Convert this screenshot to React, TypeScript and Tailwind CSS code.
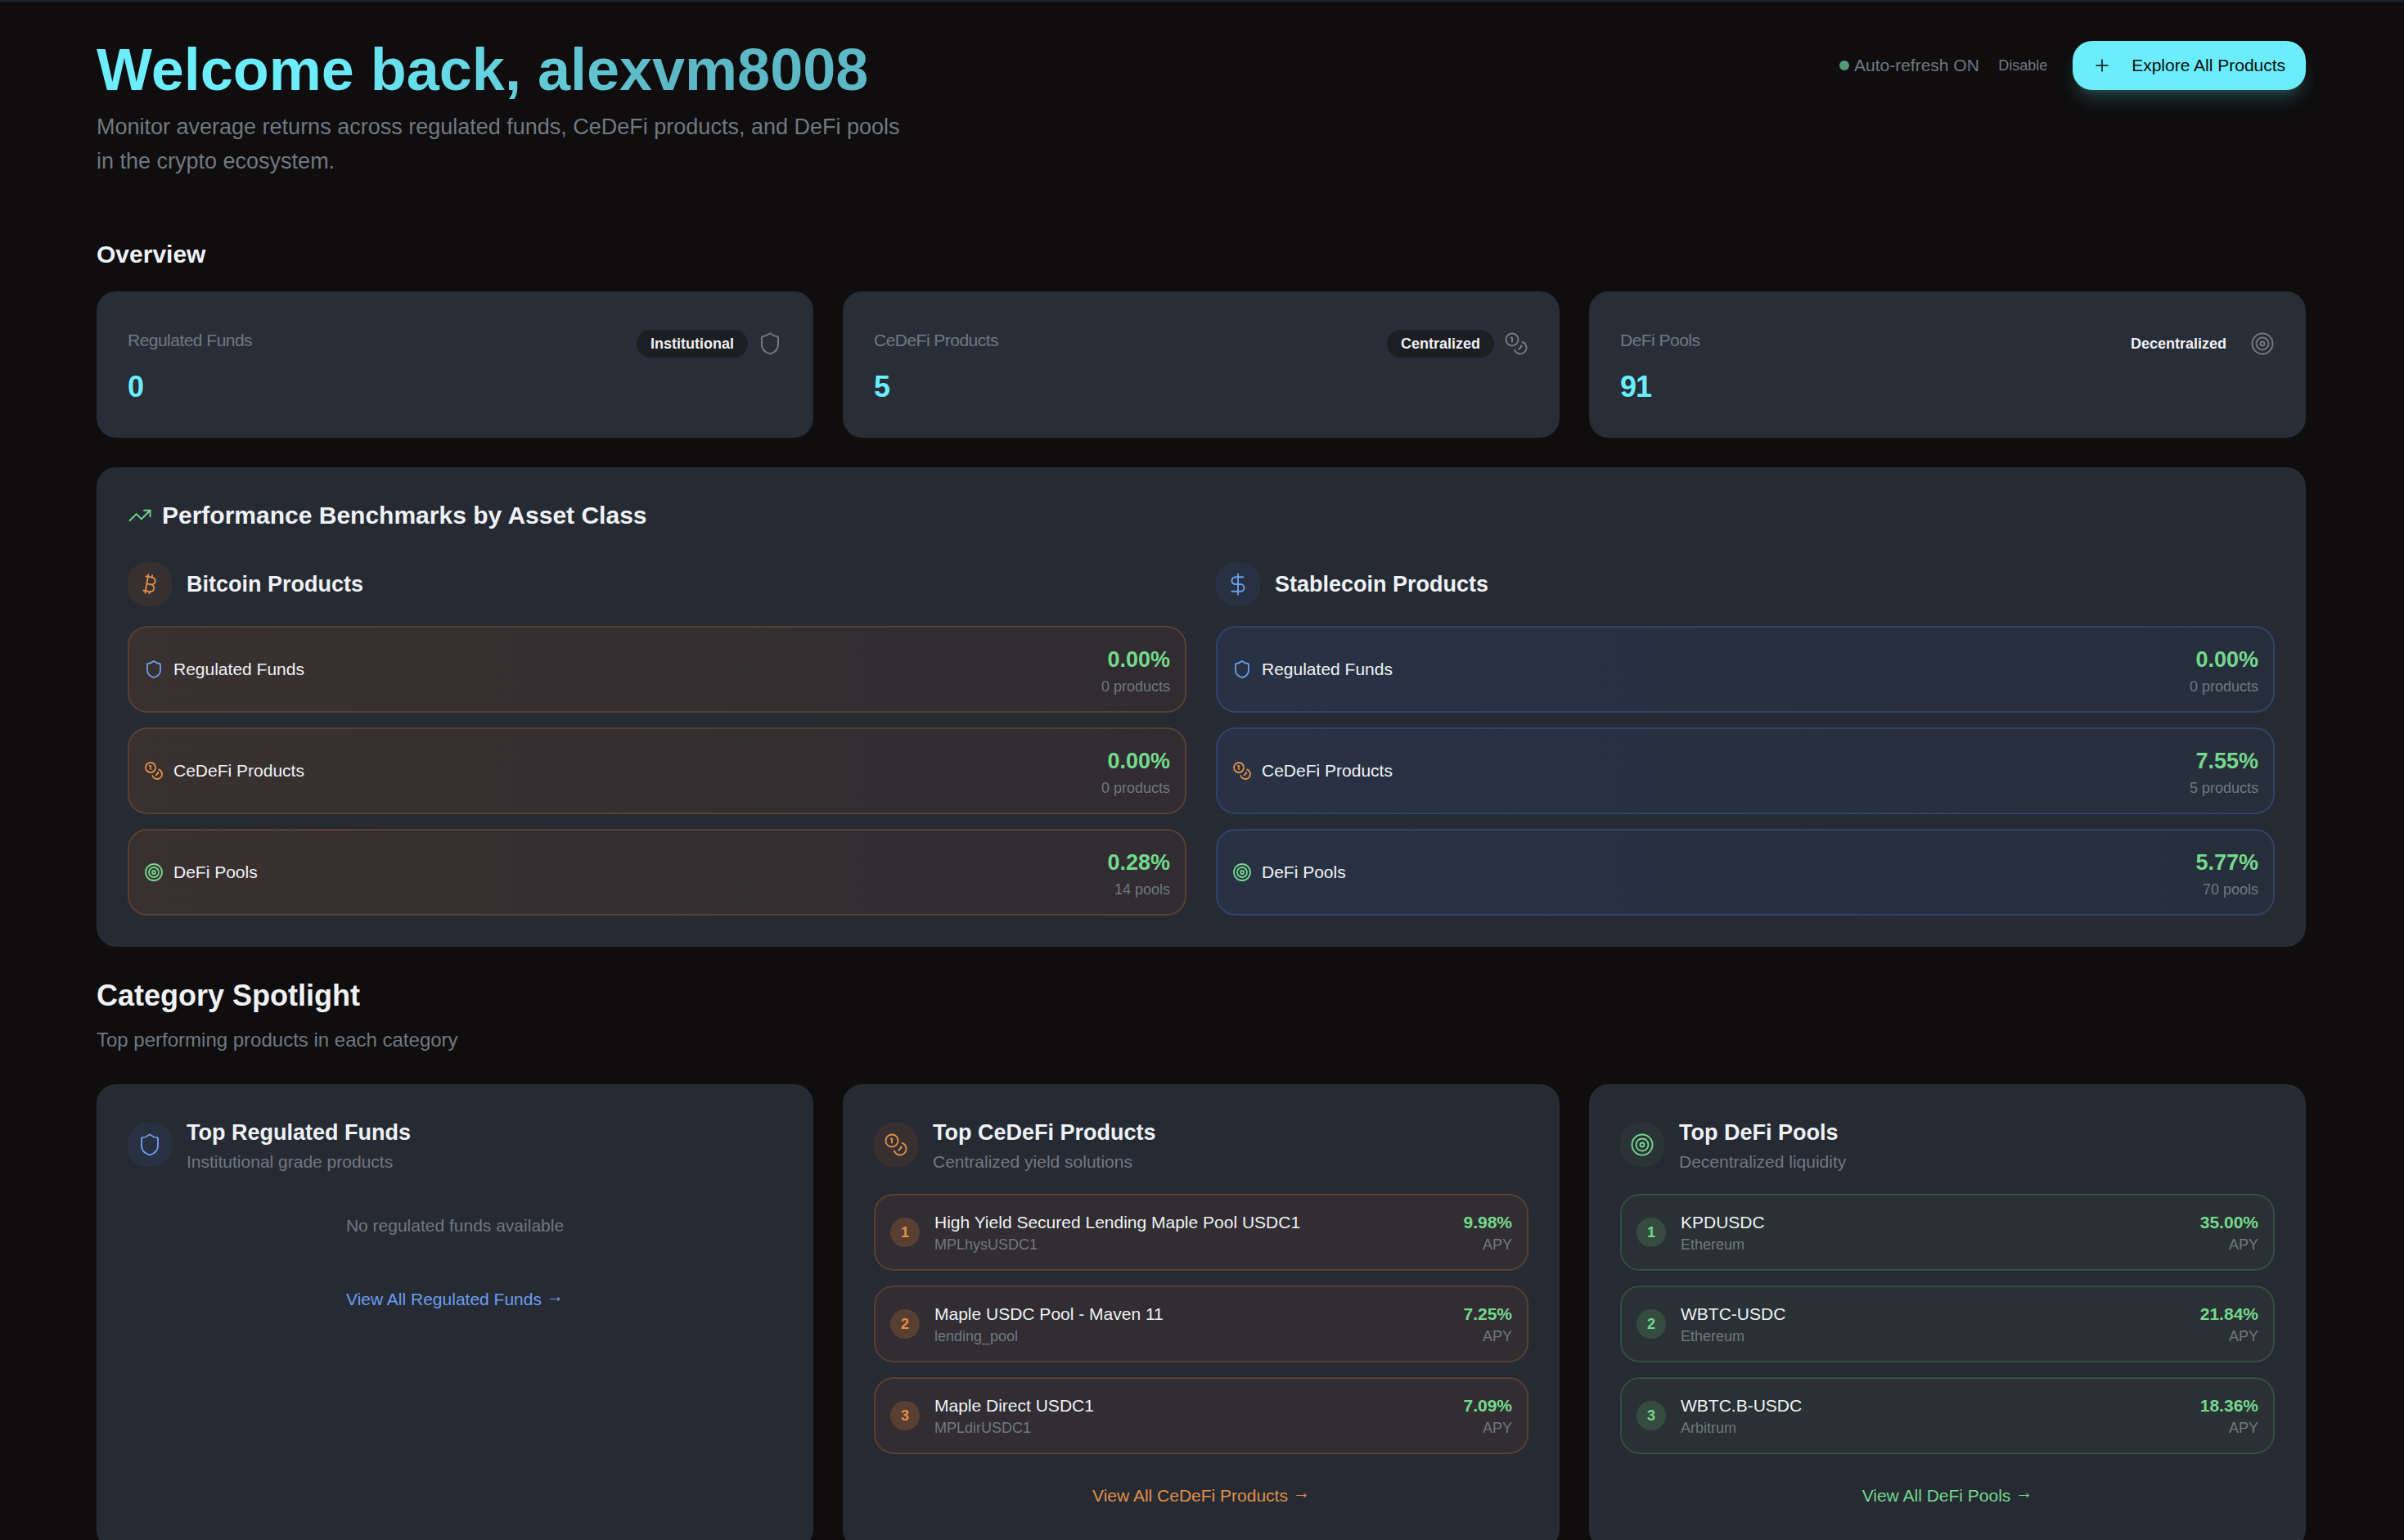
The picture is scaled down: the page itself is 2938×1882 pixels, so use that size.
import type { ReactNode } from "react";
import {
    Bitcoin,
    Coins,
    DollarSign,
    type LucideIcon,
    Plus,
    Shield,
    Target,
    TrendingUp,
} from "lucide-react";
import clsx from "clsx";

type Tone = "blue" | "orange" | "green";

type Overview = {
    label: string;
    value: number;
    badge: string;
    badgeClass: string;
    icon: LucideIcon;
};

type Benchmark = {
    label: string;
    icon: LucideIcon;
    iconClass: string;
    value: string;
    count: string;
};

type Product = {
    name: string;
    detail: string;
    apy: string;
};

const toneText: Record<Tone, string> = {
    blue: "text-[#6b9ff0]",
    orange: "text-[#e0904a]",
    green: "text-[#74d98c]",
};

const toneChip: Record<Tone, string> = {
    blue: "bg-[#283142]",
    orange: "bg-[#383030]",
    green: "bg-[#2a3336]",
};

const toneRow: Record<Tone, string> = {
    blue: "border-[#30436a] bg-[#283142]",
    orange: "border-[#593f31] bg-[#312d32]",
    green: "border-[#364c40] bg-[#293134]",
};

const toneRank: Record<Tone, string> = {
    blue: "bg-[#30436a]",
    orange: "bg-[#593f31]",
    green: "bg-[#364c40]",
};

const overview: Overview[] = [
    {
        label: "Regulated Funds",
        value: 0,
        badge: "Institutional",
        badgeClass: "border-transparent bg-[#1b1e22]",
        icon: Shield,
    },
    {
        label: "CeDeFi Products",
        value: 5,
        badge: "Centralized",
        badgeClass: "border-transparent bg-[#1b1e22]",
        icon: Coins,
    },
    {
        label: "DeFi Pools",
        value: 91,
        badge: "Decentralized",
        badgeClass: "border-[#272b34]",
        icon: Target,
    },
];

const bitcoinBenchmarks: Benchmark[] = [
    {
        label: "Regulated Funds",
        icon: Shield,
        iconClass: toneText.blue,
        value: "0.00%",
        count: "0 products",
    },
    {
        label: "CeDeFi Products",
        icon: Coins,
        iconClass: toneText.orange,
        value: "0.00%",
        count: "0 products",
    },
    {
        label: "DeFi Pools",
        icon: Target,
        iconClass: toneText.green,
        value: "0.28%",
        count: "14 pools",
    },
];

const stablecoinBenchmarks: Benchmark[] = [
    {
        label: "Regulated Funds",
        icon: Shield,
        iconClass: toneText.blue,
        value: "0.00%",
        count: "0 products",
    },
    {
        label: "CeDeFi Products",
        icon: Coins,
        iconClass: toneText.orange,
        value: "7.55%",
        count: "5 products",
    },
    {
        label: "DeFi Pools",
        icon: Target,
        iconClass: toneText.green,
        value: "5.77%",
        count: "70 pools",
    },
];

const cedefiProducts: Product[] = [
    { name: "High Yield Secured Lending Maple Pool USDC1", detail: "MPLhysUSDC1", apy: "9.98%" },
    { name: "Maple USDC Pool - Maven 11", detail: "lending_pool", apy: "7.25%" },
    { name: "Maple Direct USDC1", detail: "MPLdirUSDC1", apy: "7.09%" },
];

const defiPools: Product[] = [
    { name: "KPDUSDC", detail: "Ethereum", apy: "35.00%" },
    { name: "WBTC-USDC", detail: "Ethereum", apy: "21.84%" },
    { name: "WBTC.B-USDC", detail: "Arbitrum", apy: "18.36%" },
];

function Card({ className, children }: { className?: string; children: ReactNode }) {
    return (
        <div
            className={clsx(
                "rounded-2xl border-[1.4px] border-[#272c35] p-6",
                className ?? "bg-[#262a33]",
            )}>
            {children}
        </div>
    );
}

function IconChip({ icon: Icon, tone }: { icon: LucideIcon; tone: Tone }) {
    return (
        <div className={clsx("rounded-2xl p-2", toneChip[tone], toneText[tone])}>
            <Icon className="size-5" strokeWidth={1.5} />
        </div>
    );
}

function OverviewCard({ label, value, badge, badgeClass, icon: Icon }: Overview) {
    return (
        <Card className="flex h-[119.3px] items-start justify-between bg-[#282e38]">
            <div className="pt-[4.4px]">
                <h3 className="text-sm tracking-tight text-[#717881]">{label}</h3>
                <p className="mt-3 text-2xl font-bold tracking-tight text-[#6cedfb]">{value}</p>
            </div>
            <div className="flex items-center gap-2 pt-1.5">
                <span
                    className={clsx(
                        "rounded-full border-[1.4px] px-2.5 py-0.5 text-xs font-bold",
                        badgeClass,
                    )}>
                    {badge}
                </span>
                <Icon className="size-5 text-[#717881]" strokeWidth={1.6} />
            </div>
        </Card>
    );
}

function BenchmarkColumn({
    title,
    icon,
    tone,
    rowClass,
    rows,
}: {
    title: string;
    icon: LucideIcon;
    tone: Tone;
    rowClass: string;
    rows: Benchmark[];
}) {
    return (
        <div className="space-y-4">
            <div className="flex items-center gap-3">
                <IconChip icon={icon} tone={tone} />
                <h3 className="text-lg font-bold">{title}</h3>
            </div>
            <div className="space-y-3">
                {rows.map(({ label, icon: Icon, iconClass, value, count }) => (
                    <div
                        key={label}
                        className={clsx(
                            "flex items-center justify-between rounded-2xl border-[1.4px] bg-linear-to-r p-3",
                            rowClass,
                        )}>
                        <div className="flex items-center gap-2">
                            <Icon className={clsx("size-4", iconClass)} strokeWidth={1.8} />
                            <span className="text-sm">{label}</span>
                        </div>
                        <div className="text-right">
                            <div className="text-lg font-bold text-[#74d98c]">{value}</div>
                            <div className="text-xs text-[#717881]">{count}</div>
                        </div>
                    </div>
                ))}
            </div>
        </div>
    );
}

function SpotlightCard({
    title,
    subtitle,
    icon,
    tone,
    products,
    emptyText,
    linkText,
}: {
    title: string;
    subtitle: string;
    icon: LucideIcon;
    tone: Tone;
    products: Product[];
    emptyText?: string;
    linkText: string;
}) {
    return (
        <Card>
            <div className="mb-4 flex items-center gap-3">
                <IconChip icon={icon} tone={tone} />
                <div>
                    <h3 className="text-lg font-bold">{title}</h3>
                    <p className="text-sm text-[#717881]">{subtitle}</p>
                </div>
            </div>
            {products.length === 0 && (
                <p className="py-4 text-center text-sm text-[#717881]">{emptyText}</p>
            )}
            <div className="space-y-3">
                {products.map((product, i) => (
                    <div
                        key={product.name}
                        className={clsx(
                            "flex items-center justify-between rounded-2xl border-[1.4px] p-3",
                            toneRow[tone],
                        )}>
                        <div className="flex items-center gap-3">
                            <div
                                className={clsx(
                                    "flex size-6 items-center justify-center rounded-full text-xs font-bold",
                                    toneRank[tone],
                                    toneText[tone],
                                )}>
                                {i + 1}
                            </div>
                            <div>
                                <div className="text-sm">{product.name}</div>
                                <div className="text-xs text-[#717881]">{product.detail}</div>
                            </div>
                        </div>
                        <div className="text-right">
                            <div className="text-sm font-bold text-[#74d98c]">{product.apy}</div>
                            <div className="text-xs text-[#717881]">APY</div>
                        </div>
                    </div>
                ))}
            </div>
            <button
                className={clsx(
                    "mt-4 flex h-9 w-full items-center justify-center gap-1 text-sm",
                    toneText[tone],
                )}>
                {linkText}
                <span className="pb-[5px]">→</span>
            </button>
        </Card>
    );
}

export default function App() {
    return (
        <div className="h-[1882px] w-[2938px] overflow-hidden bg-[#0f0d0e] font-['Liberation_Sans',Arial,sans-serif] text-[#eff2f5]">
            <div className="border-t-[1.4px] border-[#1c2027] [zoom:1.5]">
                <main className="ml-[78.67px] w-[1800px] pt-8">
                    <header className="flex items-start justify-between">
                        <div className="w-[672px]">
                            <h1 className="-mt-[0.67px] bg-linear-to-r from-[#6cedfb] from-25% to-[#5cb8c4] to-70% bg-clip-text text-5xl leading-none font-bold text-transparent">
                                Welcome back, alexvm8008
                            </h1>
                            <p className="mt-[8.67px] text-lg text-[#717881]">
                                Monitor average returns across regulated funds, CeDeFi products, and
                                DeFi pools in the crypto ecosystem.
                            </p>
                        </div>
                        <div className="flex items-center">
                            <span className="mr-1 size-2 rounded-full bg-[#549a78]" />
                            <span className="text-sm text-[#717881]">Auto-refresh ON</span>
                            <button className="ml-[15.6px] text-xs text-[#717881]">Disable</button>
                            <button className="ml-[20.6px] flex h-10 items-center rounded-2xl bg-[#6cedfb] pr-[16.6px] pl-4 text-sm text-[#0f0d0e] shadow-lg shadow-[#6cedfb]/20">
                                <Plus className="mr-4 size-4" strokeWidth={1.5} />
                                Explore All Products
                            </button>
                        </div>
                    </header>

                    <section className="mt-12">
                        <h2 className="mb-4 text-xl font-bold">Overview</h2>
                        <div className="grid grid-cols-3 gap-6">
                            {overview.map((item) => (
                                <OverviewCard key={item.label} {...item} />
                            ))}
                        </div>
                    </section>

                    <Card className="mt-6 bg-[#262a33]">
                        <h2 className="mb-6 flex items-center gap-2 text-xl font-bold">
                            <TrendingUp className="size-5 text-[#74d98c]" strokeWidth={1.5} />
                            Performance Benchmarks by Asset Class
                        </h2>
                        <div className="grid grid-cols-2 gap-6">
                            <BenchmarkColumn
                                title="Bitcoin Products"
                                icon={Bitcoin}
                                tone="orange"
                                rowClass="border-[#593f31] from-[#393130] to-[#302c31]"
                                rows={bitcoinBenchmarks}
                            />
                            <BenchmarkColumn
                                title="Stablecoin Products"
                                icon={DollarSign}
                                tone="blue"
                                rowClass="border-[#30436a] from-[#283244] to-[#272e3b]"
                                rows={stablecoinBenchmarks}
                            />
                        </div>
                    </Card>

                    <section className="mt-6">
                        <h2 className="text-2xl font-bold">Category Spotlight</h2>
                        <p className="mt-2 text-base text-[#717881]">
                            Top performing products in each category
                        </p>
                        <div className="mt-6 grid grid-cols-3 gap-6">
                            <SpotlightCard
                                title="Top Regulated Funds"
                                subtitle="Institutional grade products"
                                icon={Shield}
                                tone="blue"
                                products={[]}
                                emptyText="No regulated funds available"
                                linkText="View All Regulated Funds"
                            />
                            <SpotlightCard
                                title="Top CeDeFi Products"
                                subtitle="Centralized yield solutions"
                                icon={Coins}
                                tone="orange"
                                products={cedefiProducts}
                                linkText="View All CeDeFi Products"
                            />
                            <SpotlightCard
                                title="Top DeFi Pools"
                                subtitle="Decentralized liquidity"
                                icon={Target}
                                tone="green"
                                products={defiPools}
                                linkText="View All DeFi Pools"
                            />
                        </div>
                    </section>
                </main>
            </div>
        </div>
    );
}
